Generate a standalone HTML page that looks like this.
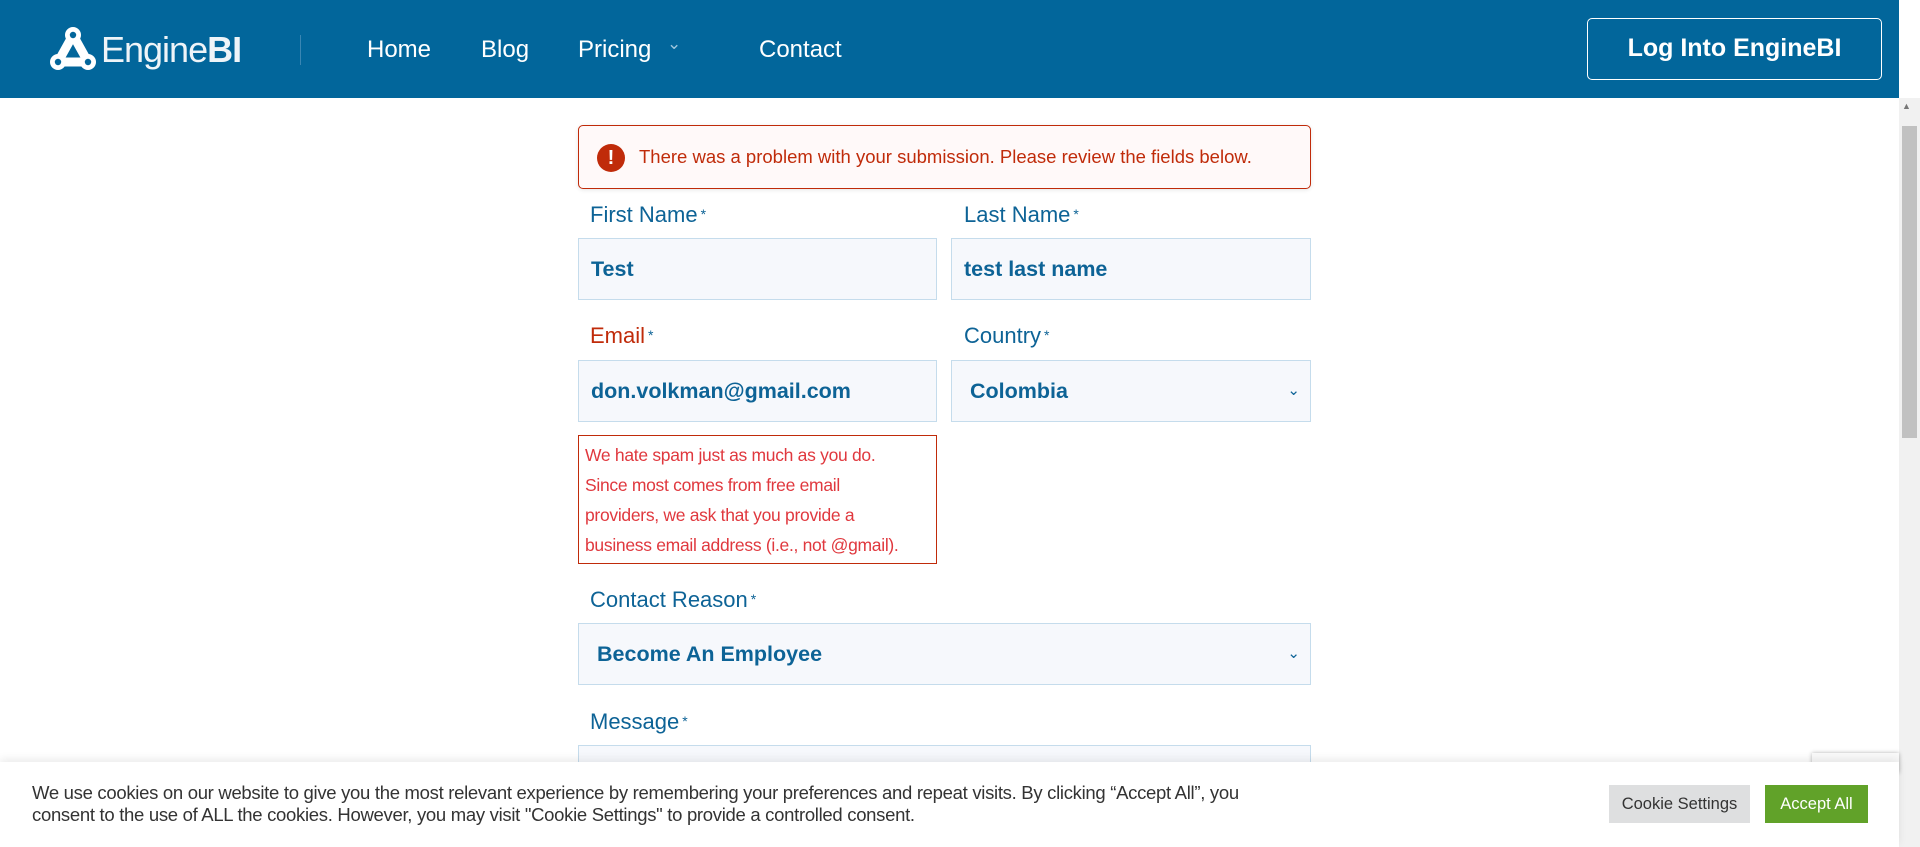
<!DOCTYPE html>
<html><head><meta charset="utf-8"><style>
*{box-sizing:border-box;margin:0;padding:0}
body{width:1920px;height:847px;overflow:hidden;background:#fff;font-family:"Liberation Sans",sans-serif;position:relative}
.hdr{position:absolute;left:0;top:0;width:1899px;height:98px;background:#02669b}
.nav{position:absolute;top:36px;color:#fff;font-size:24px}
.btn{position:absolute;left:1587px;top:18px;width:295px;height:62px;border:1.5px solid #fff;border-radius:5px;color:#fff;font-weight:bold;font-size:25px;text-align:center;line-height:59px}
.sb{position:absolute;left:1899px;top:98px;width:21px;height:749px;background:#f1f1f1}
.thumb{position:absolute;left:1902px;top:126px;width:15px;height:312px;background:#c1c1c1}
.err{position:absolute;left:578px;top:125px;width:733px;height:64px;border:1.5px solid #c02b0a;border-radius:5px;background:#fff9f9;box-shadow:0 1px 4px rgba(0,0,0,.1)}
.err .ic{position:absolute;left:18px;top:18px;width:28px;height:28px;border-radius:50%;background:#c02b0a;color:#fff;font-weight:bold;font-size:20px;text-align:center;line-height:28px}
.err .t{position:absolute;left:60px;top:20px;color:#c02b0a;font-size:18.5px}
.lab{position:absolute;color:#0d6396;font-size:22px}
.lab sup{font-size:14px;vertical-align:3px;margin-left:3px}
.in{position:absolute;height:62px;background:#f6f8fc;border:1px solid #c5dcec;color:#0d6396;font-weight:bold;font-size:21.5px;line-height:60px;padding-left:12px}
.chev{position:absolute;right:10px;top:0;font-weight:normal;font-size:15px}
.spam{position:absolute;left:578px;top:435px;width:359px;height:129px;border:1.5px solid #c02b0a;color:#e0383e;font-size:17.5px;line-height:30px;padding:4px 6px;letter-spacing:-.3px}
.ck{position:absolute;left:0;top:762px;width:1899px;height:85px;background:#fff;box-shadow:0 -3px 8px rgba(0,0,0,.08)}
.ck .t{position:absolute;left:32px;top:20px;font-size:18.5px;line-height:22px;color:#333;letter-spacing:-.3px}
.b1{position:absolute;left:1609px;top:23px;width:141px;height:38px;background:#dedfe0;color:#333;font-size:16.5px;text-align:center;line-height:38px}
.b2{position:absolute;left:1765px;top:23px;width:103px;height:38px;background:#61a229;color:#fff;font-size:16.5px;text-align:center;line-height:38px}
</style></head><body>
<div class="hdr">
<svg style="position:absolute;left:49px;top:27px" width="48" height="44" viewBox="0 0 48 44"><g fill="none" stroke="#fff" stroke-width="9" stroke-linejoin="round" stroke-linecap="round"><path d="M24 8 L9 35 L39 35 Z"/></g><g fill="#fff"><circle cx="24" cy="8" r="8"/><circle cx="9" cy="35" r="8"/><circle cx="39" cy="35" r="8"/></g><g fill="#02669b"><circle cx="24" cy="8" r="3.2"/><circle cx="9" cy="35" r="3.2"/><circle cx="39" cy="35" r="3.2"/><path d="M24 21 L29.5 30.5 L18.5 30.5 Z"/></g></svg>
<div style="position:absolute;left:101px;top:29px;color:#eef4f8;font-size:36px;letter-spacing:-1px">Engine<b>BI</b></div>
<div style="position:absolute;left:300px;top:35px;width:1px;height:30px;background:#3a86b3"></div>
<div class="nav" style="left:367px">Home</div>
<div class="nav" style="left:481px">Blog</div>
<div class="nav" style="left:578px">Pricing</div>
<div class="nav" style="left:667px;top:34px;font-size:17px;color:#9cc4dc">&#8964;</div>
<div class="nav" style="left:759px">Contact</div>
<div class="btn">Log Into EngineBI</div>
</div>
<div class="sb"></div><div class="thumb"></div>
<div style="position:absolute;left:1902px;top:101px;font-size:9px;color:#777">▲</div>
<div class="err"><div class="ic">!</div><div class="t">There was a problem with your submission. Please review the fields below.</div></div>
<div class="lab" style="left:590px;top:202px">First Name<sup>*</sup></div>
<div class="lab" style="left:964px;top:202px">Last Name<sup>*</sup></div>
<div class="in" style="left:578px;top:238px;width:359px">Test</div>
<div class="in" style="left:951px;top:238px;width:360px">test last name</div>
<div class="lab" style="left:590px;top:323px;color:#c02b0a">Email<sup style="color:#0d6396">*</sup></div>
<div class="lab" style="left:964px;top:323px">Country<sup>*</sup></div>
<div class="in" style="left:578px;top:360px;width:359px">don.volkman@gmail.com</div>
<div class="in" style="left:951px;top:360px;width:360px;padding-left:18px">Colombia<span class="chev">&#8964;</span></div>
<div class="spam">We hate spam just as much as you do.<br>Since most comes from free email<br>providers, we ask that you provide a<br>business email address (i.e., not @gmail).</div>
<div class="lab" style="left:590px;top:587px">Contact Reason<sup>*</sup></div>
<div class="in" style="left:578px;top:623px;width:733px;padding-left:18px">Become An Employee<span class="chev">&#8964;</span></div>
<div class="lab" style="left:590px;top:709px">Message<sup>*</sup></div>
<div class="in" style="left:578px;top:745px;width:733px;height:40px"></div>
<div style="position:absolute;left:1812px;top:753px;width:87px;height:20px;background:#f9f9f9;box-shadow:0 0 4px rgba(0,0,0,.3)"></div>
<div class="ck"><div class="t">We use cookies on our website to give you the most relevant experience by remembering your preferences and repeat visits. By clicking “Accept All”, you<br>consent to the use of ALL the cookies. However, you may visit "Cookie Settings" to provide a controlled consent.</div>
<div class="b1">Cookie Settings</div><div class="b2">Accept All</div></div>
</body></html>
